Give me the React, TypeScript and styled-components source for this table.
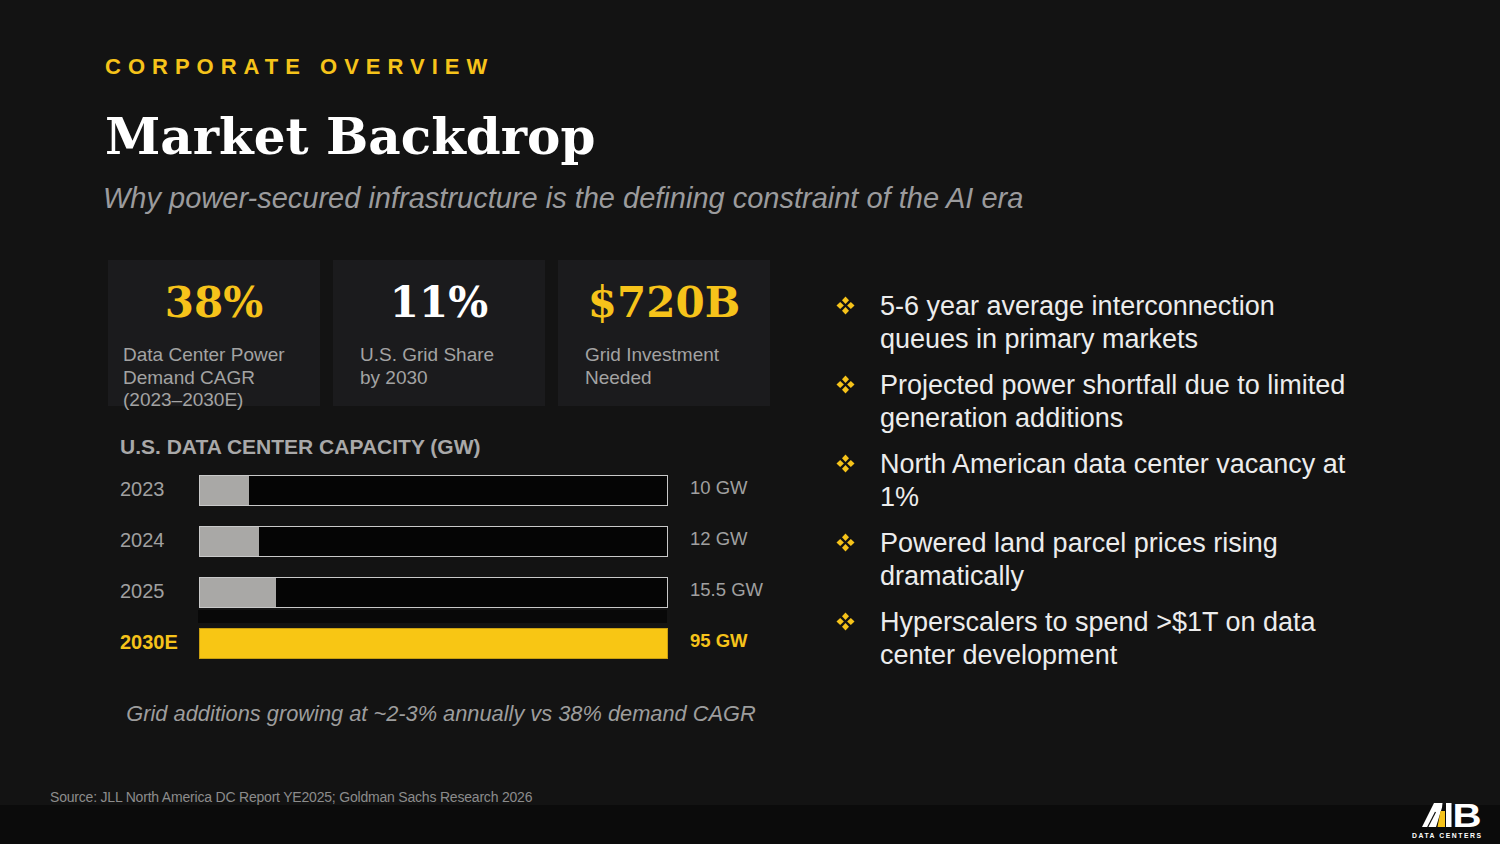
import styled, { createGlobalStyle } from 'styled-components'

const GlobalStyle = createGlobalStyle`
  html, body {
    margin: 0;
    padding: 0;
    background: #131313;
  }
  * {
    box-sizing: border-box;
  }
`

const yellow = '#f6c31a'
const sans = `'Liberation Sans', Arial, sans-serif`
const serif = `'DejaVu Serif', Georgia, serif`

const Page = styled.div`
  width: 1500px;
  height: 844px;
  background: #131313;
  display: flex;
  flex-direction: column;
  overflow: hidden;
  font-family: ${sans};
`

const Main = styled.main`
  flex: 1;
  padding: 54px 0 0 105px;
  display: flex;
  flex-direction: column;
`

const Eyebrow = styled.div`
  color: ${yellow};
  font-size: 22px;
  line-height: 26px;
  font-weight: 700;
  letter-spacing: 7px;
`

const Title = styled.h1`
  margin: 32px 0 0;
  color: #ffffff;
  font-family: ${serif};
  font-size: 50px;
  line-height: 50px;
  font-weight: 700;
`

const Subtitle = styled.p`
  margin: 20px 0 0 -2px;
  color: #9b9b9d;
  font-size: 29px;
  line-height: 32px;
  font-style: italic;
`

const Content = styled.div`
  margin-top: 46px;
  display: grid;
  grid-template-columns: 662px 520px;
  column-gap: 66px;
  margin-left: 3px;
`

const LeftColumn = styled.section`
  display: flex;
  flex-direction: column;
`

const Cards = styled.div`
  display: grid;
  grid-template-columns: repeat(3, 212px);
  column-gap: 13px;
`

const Card = styled.div`
  height: 146px;
  background: #1b1b1d;
  padding-top: 17px;
  display: flex;
  flex-direction: column;
`

const StatValue = styled.div<{ $accent?: boolean }>`
  text-align: center;
  color: ${p => (p.$accent ? yellow : '#ffffff')};
  font-family: ${serif};
  font-size: 42px;
  line-height: 52px;
  font-weight: 700;
`

const StatLabel = styled.div<{ $inset: number }>`
  margin-top: 15px;
  padding-left: ${p => p.$inset}px;
  color: #a3a3a3;
  font-size: 19px;
  line-height: 22.5px;
`

const Chart = styled.div`
  margin-top: 29px;
  padding-left: 12px;
  display: flex;
  flex-direction: column;
`

const ChartTitle = styled.div`
  color: #a9a9a9;
  font-size: 21px;
  line-height: 24px;
  font-weight: 700;
`

const Rows = styled.div`
  margin-top: 16px;
  display: grid;
  grid-template-columns: 79px 469px auto;
  grid-auto-rows: 31px;
  row-gap: 20px;
  align-items: center;
`

const Year = styled.div<{ $highlight?: boolean }>`
  margin-top: -2px;
  color: ${p => (p.$highlight ? yellow : '#a0a0a0')};
  font-size: 20px;
  font-weight: ${p => (p.$highlight ? 700 : 400)};
`

const Track = styled.div<{ $highlight?: boolean }>`
  position: relative;
  height: 31px;
  background: ${p => (p.$highlight ? '#f8c614' : '#050505')};
  border: 1px solid ${p => (p.$highlight ? '#c99f10' : '#c9c9c9')};
  ${p =>
    p.$highlight &&
    `
    &::before {
      content: '';
      position: absolute;
      left: -2px;
      right: 0;
      top: -19px;
      height: 13px;
      background: #080808;
    }
  `}
`

const Fill = styled.div`
  height: 100%;
  background: #a9a8a6;
`

const Amount = styled.div<{ $highlight?: boolean }>`
  margin-left: 22px;
  margin-top: -5px;
  color: ${p => (p.$highlight ? yellow : '#a0a0a0')};
  font-size: 18.5px;
  font-weight: ${p => (p.$highlight ? 700 : 400)};
`

const Note = styled.p`
  margin: 42px 0 0 4px;
  text-align: center;
  color: #9d9d9d;
  font-size: 21.8px;
  line-height: 26px;
  font-style: italic;
`

const BulletList = styled.ul`
  list-style: none;
  margin: 0;
  padding: 30px 0 0;
  display: flex;
  flex-direction: column;
  gap: 13px;
`

const BulletItem = styled.li`
  display: flex;
  align-items: flex-start;
  gap: 25px;
`

const BulletIcon = styled.svg`
  flex: none;
  width: 19px;
  height: 19px;
  margin-top: 6px;
`

const BulletText = styled.span`
  width: 478px;
  color: #ececec;
  font-size: 27px;
  line-height: 33px;
`

const Footer = styled.footer`
  position: relative;
  display: flex;
  flex-direction: column;
`

const Source = styled.div`
  padding: 0 0 0 50px;
  color: #8c8c8c;
  font-size: 14px;
  line-height: 16px;
  letter-spacing: -0.2px;
`

const Band = styled.div`
  height: 39px;
  background: #0b0b0b;
`

const Logo = styled.svg`
  position: absolute;
  right: 12px;
  bottom: 4px;
  width: 78px;
  height: 48px;
  overflow: visible;
`

const stats = [
  { value: '38%', accent: true, inset: 15, label: ['Data Center Power', 'Demand CAGR', '(2023–2030E)'] },
  { value: '11%', accent: false, inset: 27, label: ['U.S. Grid Share', 'by 2030'] },
  { value: '$720B', accent: true, inset: 27, label: ['Grid Investment', 'Needed'] },
]

const capacity = [
  { year: '2023', gw: 10, label: '10 GW' },
  { year: '2024', gw: 12, label: '12 GW' },
  { year: '2025', gw: 15.5, label: '15.5 GW' },
  { year: '2030E', gw: 95, label: '95 GW', highlight: true },
]

const bullets = [
  '5-6 year average interconnection queues in primary markets',
  'Projected power shortfall due to limited generation additions',
  'North American data center vacancy at 1%',
  'Powered land parcel prices rising dramatically',
  'Hyperscalers to spend >$1T on data center development',
]

const DiamondBullet = () => (
  <BulletIcon viewBox="0 0 19 19">
    <g fill={yellow}>
      <polygon points="9.5,0.5 13,4.2 9.5,7.9 6,4.2" />
      <polygon points="4.2,6 7.9,9.5 4.2,13 0.5,9.5" />
      <polygon points="14.8,6 18.5,9.5 14.8,13 11.1,9.5" />
      <polygon points="9.5,11.1 13,14.8 9.5,18.5 6,14.8" />
    </g>
  </BulletIcon>
)

// AIB Data Centers mark
const BrandLogo = () => (
  <Logo viewBox="0 0 78 48">
    <g transform="translate(0 8)">
      <polygon points="12,27 24,3 32.5,3 32,7.5 26,27" fill="#ffffff" />
      <line x1="17.5" y1="27.5" x2="25.5" y2="12" stroke="#0b0b0b" strokeWidth="1.2" />
      <polygon points="30.5,11 35,11 35,27 27.5,27" fill={yellow} />
      <rect x="36" y="3" width="5.5" height="24" fill="#ffffff" />
      <g transform="translate(42.5 27) scale(1.22 1)">
        <text
          x="0"
          y="0"
          fill="#ffffff"
          fontFamily="'Liberation Sans', Arial, sans-serif"
          fontWeight="700"
          fontSize="33"
        >
          B
        </text>
      </g>
      <text
        x="2"
        y="37.5"
        fill="#ffffff"
        fontFamily="'Liberation Sans', Arial, sans-serif"
        fontWeight="700"
        fontSize="6.8"
        letterSpacing="1.55"
      >
        DATA CENTERS
      </text>
    </g>
  </Logo>
)

export default function App() {
  return (
    <>
      <GlobalStyle />
      <Page>
        <Main>
          <Eyebrow>CORPORATE OVERVIEW</Eyebrow>
          <Title>Market Backdrop</Title>
          <Subtitle>Why power-secured infrastructure is the defining constraint of the AI era</Subtitle>
          <Content>
            <LeftColumn>
              <Cards>
                {stats.map(s => (
                  <Card key={s.value}>
                    <StatValue $accent={s.accent}>{s.value}</StatValue>
                    <StatLabel $inset={s.inset}>
                      {s.label.map(line => (
                        <div key={line}>{line}</div>
                      ))}
                    </StatLabel>
                  </Card>
                ))}
              </Cards>
              <Chart>
                <ChartTitle>U.S. DATA CENTER CAPACITY (GW)</ChartTitle>
                <Rows>
                  {capacity.flatMap(row => [
                    <Year key={row.year + 'y'} $highlight={row.highlight}>{row.year}</Year>,
                    <Track key={row.year + 't'} $highlight={row.highlight}>
                      {!row.highlight && <Fill style={{ width: `${(row.gw / 95) * 100}%` }} />}
                    </Track>,
                    <Amount key={row.year + 'a'} $highlight={row.highlight}>{row.label}</Amount>,
                  ])}
                </Rows>
              </Chart>
              <Note>Grid additions growing at ~2-3% annually vs 38% demand CAGR</Note>
            </LeftColumn>
            <BulletList>
              {bullets.map(b => (
                <BulletItem key={b}>
                  <DiamondBullet />
                  <BulletText>{b}</BulletText>
                </BulletItem>
              ))}
            </BulletList>
          </Content>
        </Main>
        <Footer>
          <Source>Source: JLL North America DC Report YE2025; Goldman Sachs Research 2026</Source>
          <Band />
          <BrandLogo />
        </Footer>
      </Page>
    </>
  )
}
